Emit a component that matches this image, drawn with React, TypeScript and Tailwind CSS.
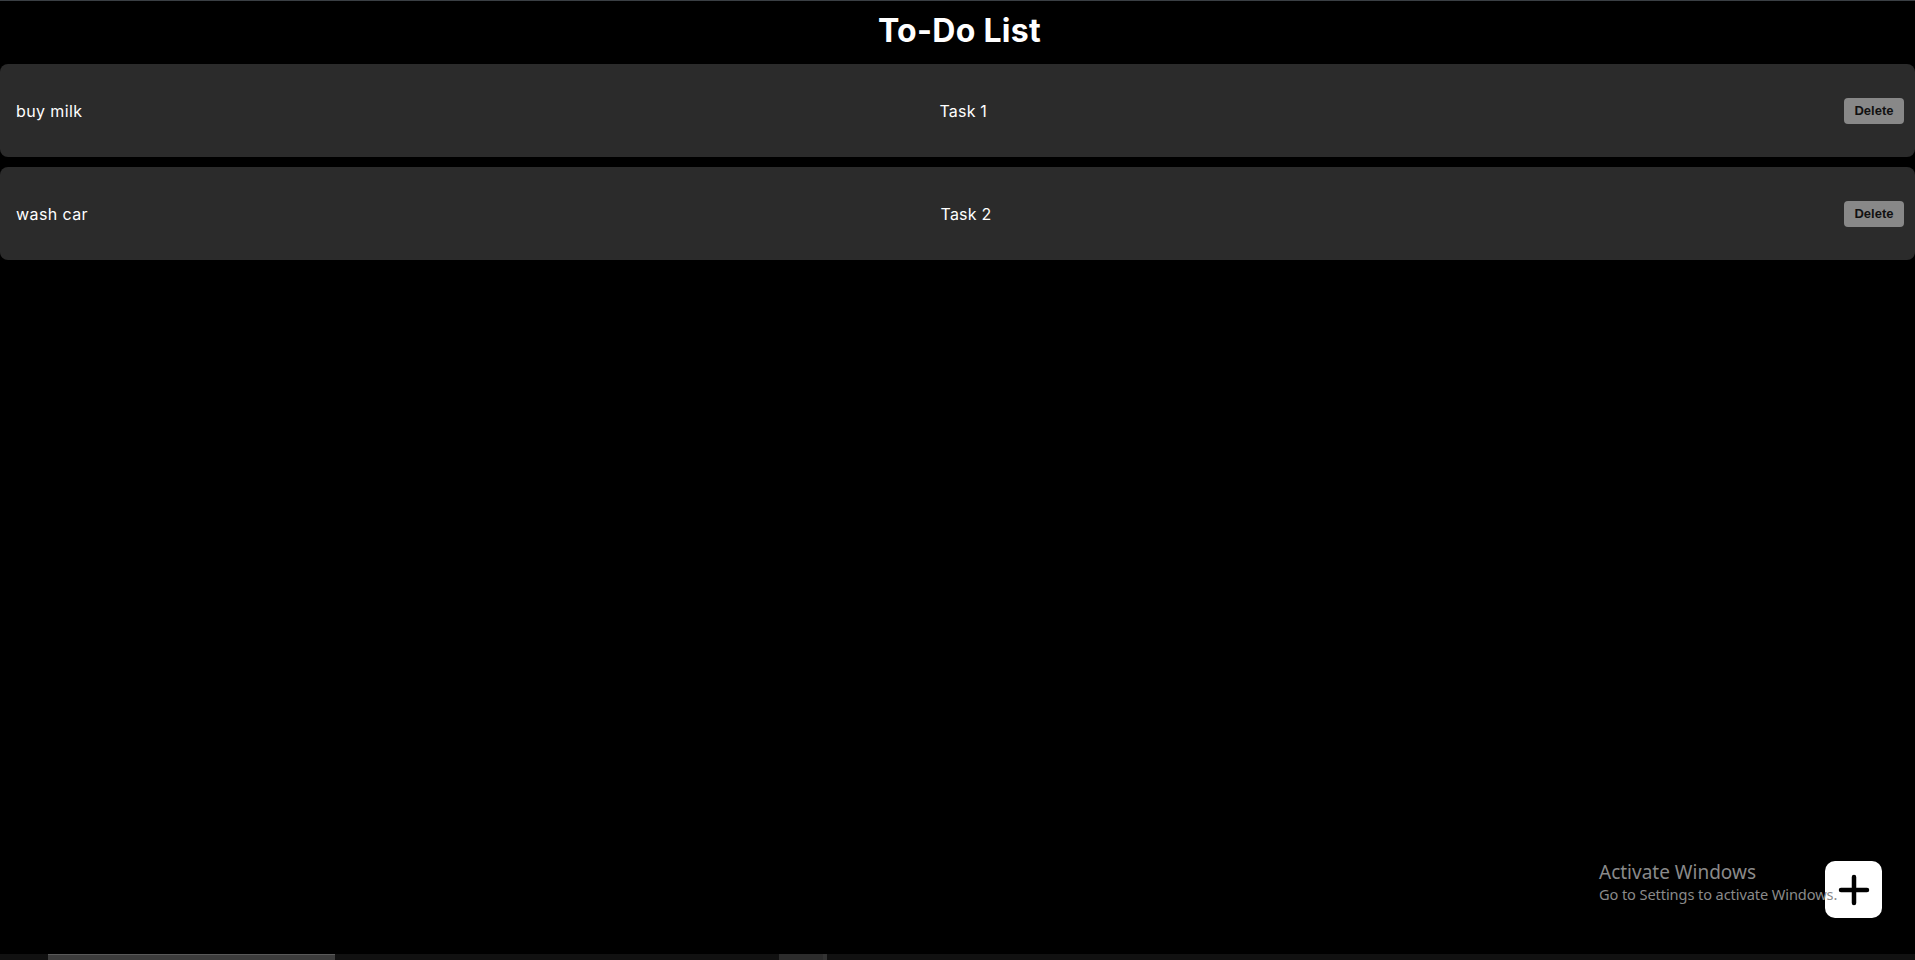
import React from "react";

const tasks = [
  { text: "buy milk", label: "Task 1" },
  { text: "wash car", label: "Task 2" },
];

export default function App() {
  return (
    <div className="relative flex h-[960px] w-[1915px] flex-col overflow-hidden bg-black text-white" style={{ fontFamily: "Inter, 'Noto Sans', sans-serif" }}>
      <div className="h-px w-full bg-[#3a3f44]" />
      <h1 className="flex h-[63px] items-center justify-center pb-[4px] pl-[4px] text-[32px] font-bold tracking-[0.3px] text-white">
        To-Do List
      </h1>
      <div className="flex flex-col gap-[10px]">
        {tasks.map((t) => (
          <div key={t.label} className="flex h-[93px] items-center justify-between rounded-[8px] bg-[#2b2b2b] pl-[16px] pr-[11px]">
            <span className="text-[16px] tracking-[0.4px] text-white">{t.text}</span>
            <span className="text-[16px] tracking-[0.2px] text-white">{t.label}</span>
            <button className="flex h-[26px] w-[60px] items-center justify-center rounded-[4px] bg-[#888888] text-[13px] font-bold text-[#111]" style={{ fontFamily: "'Liberation Sans', Arial, sans-serif" }}>
              Delete
            </button>
          </div>
        ))}
      </div>
      <div className="flex-1" />
      <div className="flex h-[6px] w-full bg-[#111111]">
        <div className="ml-[48px] h-full w-[287px] border-t border-[#5a5a5a] bg-[#3c3c3c]" />
        <div className="ml-[444px] h-full w-[44px] bg-[#2c2c2c]" />
        <div className="h-full w-[4px] bg-[#333333]" />
      </div>

      <button className="absolute left-[1825px] top-[861px] flex h-[57px] w-[57px] items-center justify-center rounded-[10px] bg-white">
        <svg width="32" height="32" viewBox="0 0 32 32">
          <path d="M16 3 V29 M3 16 H29" stroke="#000" strokeWidth="4.5" strokeLinecap="round" fill="none" />
        </svg>
      </button>

      <div className="pointer-events-none absolute left-[1599px] top-[860px] z-10 text-[#8a8a8a]" style={{ fontFamily: "'Noto Sans', 'Open Sans', sans-serif" }}>
        <div className="text-[19px] leading-[24px]">Activate Windows</div>
        <div className="text-[14.6px] leading-[20px] tracking-[-0.1px]">Go to Settings to activate Windows.</div>
      </div>
    </div>
  );
}
